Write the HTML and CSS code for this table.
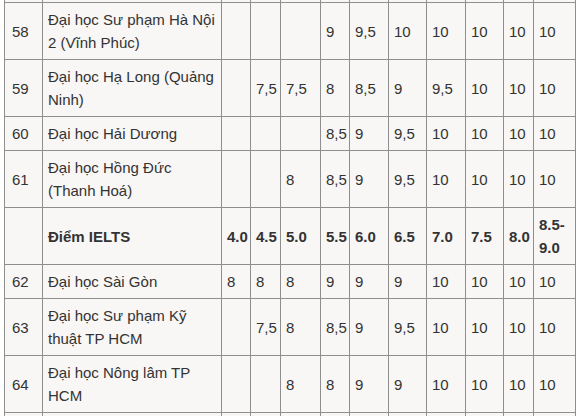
FILE: index.html
```html
<!DOCTYPE html>
<html lang="vi">
<head>
<meta charset="utf-8">
<title>Bảng quy đổi điểm IELTS</title>
<link rel="stylesheet" href="styles.css">
</head>
<body>
<div class="page">
<table class="score-table">
  <colgroup>
    <col class="c-no">
    <col class="c-name">
    <col class="c-s1">
    <col class="c-s2">
    <col class="c-s3">
    <col class="c-s4">
    <col class="c-s5">
    <col class="c-s6">
    <col class="c-s7">
    <col class="c-s8">
    <col class="c-s9">
    <col class="c-s10">
  </colgroup>
  <tbody>
    <tr class="cut-top">
      <td></td><td></td><td></td><td></td><td></td><td></td><td></td><td></td><td></td><td></td><td></td><td></td>
    </tr>
    <tr>
      <td class="no">58</td><td>Đại học Sư phạm Hà Nội 2 (Vĩnh Phúc)</td>
      <td></td><td></td><td></td><td>9</td><td>9,5</td><td>10</td><td>10</td><td>10</td><td>10</td><td>10</td>
    </tr>
    <tr>
      <td class="no">59</td><td>Đại học Hạ Long (Quảng Ninh)</td>
      <td></td><td>7,5</td><td>7,5</td><td>8</td><td>8,5</td><td>9</td><td>9,5</td><td>10</td><td>10</td><td>10</td>
    </tr>
    <tr>
      <td class="no">60</td><td>Đại học Hải Dương</td>
      <td></td><td></td><td></td><td>8,5</td><td>9</td><td>9,5</td><td>10</td><td>10</td><td>10</td><td>10</td>
    </tr>
    <tr>
      <td class="no">61</td><td>Đại học Hồng Đức (Thanh Hoá)</td>
      <td></td><td></td><td>8</td><td>8,5</td><td>9</td><td>9,5</td><td>10</td><td>10</td><td>10</td><td>10</td>
    </tr>
    <tr class="ielts">
      <td class="no"></td><td>Điểm IELTS</td>
      <td>4.0</td><td>4.5</td><td>5.0</td><td>5.5</td><td>6.0</td><td>6.5</td><td>7.0</td><td>7.5</td><td>8.0</td><td>8.5-9.0</td>
    </tr>
    <tr>
      <td class="no">62</td><td>Đại học Sài Gòn</td>
      <td>8</td><td>8</td><td>8</td><td>9</td><td>9</td><td>9</td><td>10</td><td>10</td><td>10</td><td>10</td>
    </tr>
    <tr>
      <td class="no">63</td><td>Đại học Sư phạm Kỹ thuật TP HCM</td>
      <td></td><td>7,5</td><td>8</td><td>8,5</td><td>9</td><td>9,5</td><td>10</td><td>10</td><td>10</td><td>10</td>
    </tr>
    <tr>
      <td class="no">64</td><td>Đại học Nông lâm TP HCM</td>
      <td></td><td></td><td>8</td><td>8</td><td>9</td><td>9</td><td>10</td><td>10</td><td>10</td><td>10</td>
    </tr>
    <tr class="cut-bottom">
      <td></td><td></td><td></td><td></td><td></td><td></td><td></td><td></td><td></td><td></td><td></td><td></td>
    </tr>
  </tbody>
</table>
</div>
</body>
</html>
```

FILE: styles.css
```css
html, body {
  margin: 0;
  padding: 0;
  background: #ffffff;
}

.page {
  height: 416px;
  overflow: hidden;
  padding-left: 4px;
}

.score-table {
  border-collapse: collapse;
  table-layout: fixed;
  width: 572px;
  font-family: "Liberation Sans", Arial, sans-serif;
  font-size: 15px;
  line-height: 23px;
  color: #333333;
  background: #f8f7f5;
}

.score-table td {
  border: 1px solid #8e8e8e;
  padding: 5px 2px 5px 5px;
  text-align: left;
  vertical-align: middle;
  word-wrap: break-word;
}

.score-table td.no {
  padding-left: 7px;
}

.c-no { width: 38px; }
.c-name { width: 179px; }
.c-s1 { width: 29px; }
.c-s2 { width: 30px; }
.c-s3 { width: 40px; }
.c-s4 { width: 29px; }
.c-s5 { width: 39px; }
.c-s6 { width: 38px; }
.c-s7 { width: 39px; }
.c-s8 { width: 38px; }
.c-s9 { width: 30px; }
.c-s10 { width: 42px; }

.cut-top td {
  height: 2px;
  padding: 0;
  border-top: none;
}

.cut-bottom td {
  height: 23px;
}

.ielts td {
  font-weight: bold;
}
```
